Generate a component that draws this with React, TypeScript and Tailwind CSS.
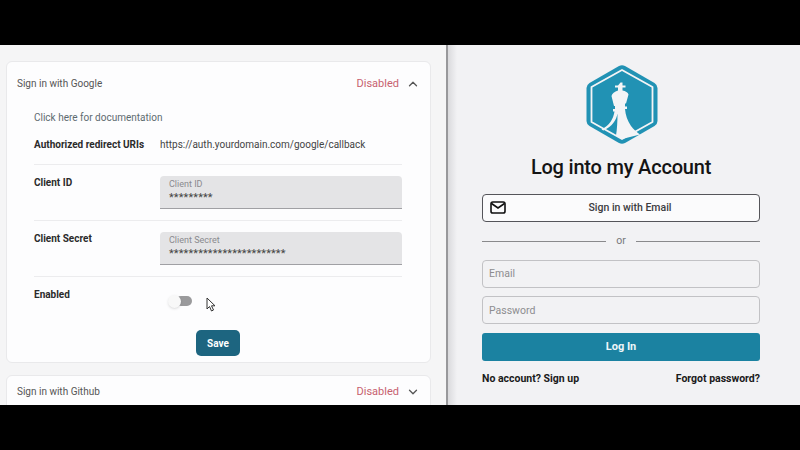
import { ChevronDown, ChevronUp } from "lucide-react";

function Row({ label, children, last }: { label: string; children: React.ReactNode; last?: boolean }) {
  return (
    <div className={`flex pt-[11px] pb-[11px] ${last ? "" : "border-b border-[#ececee]"}`}>
      <div className="w-[126px] shrink-0 text-[10px] font-bold leading-[14px] text-[#2b2b2b]">{label}</div>
      {children}
    </div>
  );
}

function SecretField({ label, value }: { label: string; value: string }) {
  return (
    <div className="h-[33px] w-[242px] rounded-t-[4px] border-b border-[#a0a0a4] bg-[#e4e4e6] px-[9px] pt-[3px]">
      <div className="text-[9px] leading-[11px] text-[#8a8a8e]">{label}</div>
      <div className="mt-[1px] text-[11px] leading-[13px] tracking-[0.12px] text-[#444]">{value}</div>
    </div>
  );
}

function Logo() {
  return (
    <svg className="ml-[2px]" width="72" height="79" viewBox="0 0 72 79">
      <path d="M33 1 Q36 -0.500 39 1 L68.500 18 Q71.500 20 71.500 23 L71.500 56 Q71.500 59 68.500 61 L39 78 Q36 79.500 33 78 L3.500 61 Q.5 59 .5 56 L.5 23 Q.5 20 3.500 18 Z" fill="#2192b4" />
      <path d="M36 5 L66.500 22 L66.500 57 L36 74 L5.500 57 L5.500 22 Z" fill="none" stroke="#f4f4f6" strokeWidth="1.800" strokeLinejoin="round" />
      <path d="M34.500 17.500 h2 v3 h3 v2 h-3 v3 c3 .5 5.500 2 6 4 l-2.500 9 h-1 v3 h2 v2.500 h-2 c.5 6 2.500 12 6 17 c2.500 3.500 6 6.500 9 8.500 L36 74 l-6 -3.500 c1 -6 1.500 -14 1.500 -22 c-1 6 -5 13 -14 17 l-2 -1 c8 -4 12 -11 13 -18 h-1.500 V44 h2 v-3 h-1 l-2.500 -10 c.5 -2.500 3 -4.500 6.500 -5.500 v-3 h-3 v-2 h3 Z" fill="#f4f4f6" />
    </svg>
  );
}

export default function App() {
  return (
    <div className="flex h-[450px] w-[800px] flex-col overflow-hidden bg-black font-['Roboto',sans-serif]">
      <div className="h-[45px] shrink-0 bg-black" />
      <div className="flex h-[360px] overflow-hidden">
        {/* settings side */}
        <div className="relative h-full w-[448px] shrink-0 overflow-hidden border-r-2 border-[#98989b] bg-[#f5f5f6] px-[6px] pt-[16px]">
          <div className="w-[425px] rounded-[6px] border border-[#e9e9eb] bg-[#fdfdfe]">
            <div className="flex h-[43px] items-center justify-between pl-[10px] pr-[10px]">
              <span className="text-[10px] text-[#555]">Sign in with Google</span>
              <div className="flex items-center gap-[7px]">
                <span className="pt-[2px] text-[11px] text-[#c7616f]">Disabled</span>
                <ChevronUp className="h-[14px] w-[14px] text-[#555]" strokeWidth={2.2} />
              </div>
            </div>
            <div className="pl-[27px] pr-[28px]">
              <div className="mt-[6px] text-[10px] leading-[14px] text-[#5d6b70]">Click here for documentation</div>
              <div className="mt-[3px] flex border-b border-[#ececee] pt-[10px] pb-[12px]">
                <div className="w-[126px] shrink-0 text-[10px] font-bold leading-[14px] text-[#2b2b2b]">Authorized redirect URIs</div>
                <div className="text-[10px] leading-[14px] text-[#444]">https://auth.yourdomain.com/google/callback</div>
              </div>
              <Row label="Client ID">
                <SecretField label="Client ID" value="*********" />
              </Row>
              <Row label="Client Secret">
                <SecretField label="Client Secret" value="************************" />
              </Row>
              <Row label="Enabled" last>
                <div className="relative mt-[7px] ml-[10px] h-[12px] w-[22px]">
                  <div className="absolute top-[1px] right-0 h-[10px] w-[16px] rounded-full bg-[#9a9a9c]" />
                  <div className="absolute top-0 left-[-2px] h-[13px] w-[13px] rounded-full bg-[#f8f8f8] shadow" />
                </div>
              </Row>
              <div className="flex justify-center">
                <button className="mt-[12px] h-[26px] w-[44px] rounded-[5px] bg-[#1d6580] text-[10px] font-bold text-white">Save</button>
              </div>
            </div>
            <div className="h-[6px]" />
          </div>
          <div className="mt-[12px] h-[60px] w-[425px] rounded-t-[6px] border border-[#e9e9eb] bg-[#fdfdfe]">
            <div className="flex h-[31px] items-center justify-between pl-[10px] pr-[10px]">
              <span className="text-[10px] text-[#555]">Sign in with Github</span>
              <div className="flex items-center gap-[7px]">
                <span className="pt-[2px] text-[11px] text-[#c7616f]">Disabled</span>
                <ChevronDown className="h-[14px] w-[14px] text-[#555]" strokeWidth={2.2} />
              </div>
            </div>
          </div>
          {/* mouse pointer */}
          <svg className="absolute left-[206px] top-[252px]" width="10" height="15" viewBox="0 0 10 15">
            <path d="M1 1 V12 L3.500 9.500 L5.500 14 L7.500 13 L5.500 8.800 H9 Z" fill="#fff" stroke="#333" strokeWidth="1" strokeLinejoin="round" />
          </svg>
        </div>

        {/* login side */}
        <div className="relative flex min-w-0 flex-1 flex-col items-center bg-[#f2f2f4] pt-[20px] pr-[6px]">
          {/* soft shade along the divider */}
          <div className="absolute inset-y-0 left-0 w-[9px] bg-gradient-to-r from-[#dadadd] to-[#f2f2f4]" />
          <Logo />
          <h1 className="mt-[10px] text-[20px] font-medium leading-[26px] tracking-[-0.2px] text-[#141414]">Log into my Account</h1>
          <div className="mt-[14px] w-[278px]">
            <button className="relative flex h-[28px] w-full items-center justify-center rounded-[4px] border border-[#55555a] bg-[#fbfbfc] pl-[18px] text-[10.5px] font-medium text-[#3c3c3f]">
              <svg className="absolute left-[7px] top-[5px]" width="16" height="15" viewBox="0 0 16 15" fill="none" stroke="#111" strokeWidth="1.6">
                <rect x="1" y="2" width="14" height="11" rx="1.800" />
                <path d="M1.500 3.500 L8 8 L14.500 3.500" />
              </svg>
              Sign in with Email
            </button>
            <div className="mt-[12px] flex items-center justify-between">
              <div className="h-px w-[124px] bg-[#8a8a8c]" />
              <span className="text-[10.5px] leading-[14px] text-[#77777a]">or</span>
              <div className="h-px w-[124px] bg-[#8a8a8c]" />
            </div>
            <div className="mt-[12px] flex h-[28px] items-center rounded-[4px] border border-[#c2c2c5] px-[6px] text-[10.5px] text-[#8d8d90]">Email</div>
            <div className="mt-[8px] flex h-[28px] items-center rounded-[4px] border border-[#c2c2c5] px-[6px] pt-[2px] text-[10.5px] text-[#8d8d90]">Password</div>
            <button className="mt-[9px] h-[28px] w-full rounded-[3px] bg-[#1b82a1] text-[11px] font-bold text-[#eef6f9]">Log In</button>
            <div className="mt-[11px] flex justify-between text-[10.5px] font-bold leading-[14px] text-[#1a1a1a]">
              <span>No account? Sign up</span>
              <span>Forgot password?</span>
            </div>
          </div>
        </div>
      </div>
      <div className="h-[45px] shrink-0 bg-black" />
    </div>
  );
}
